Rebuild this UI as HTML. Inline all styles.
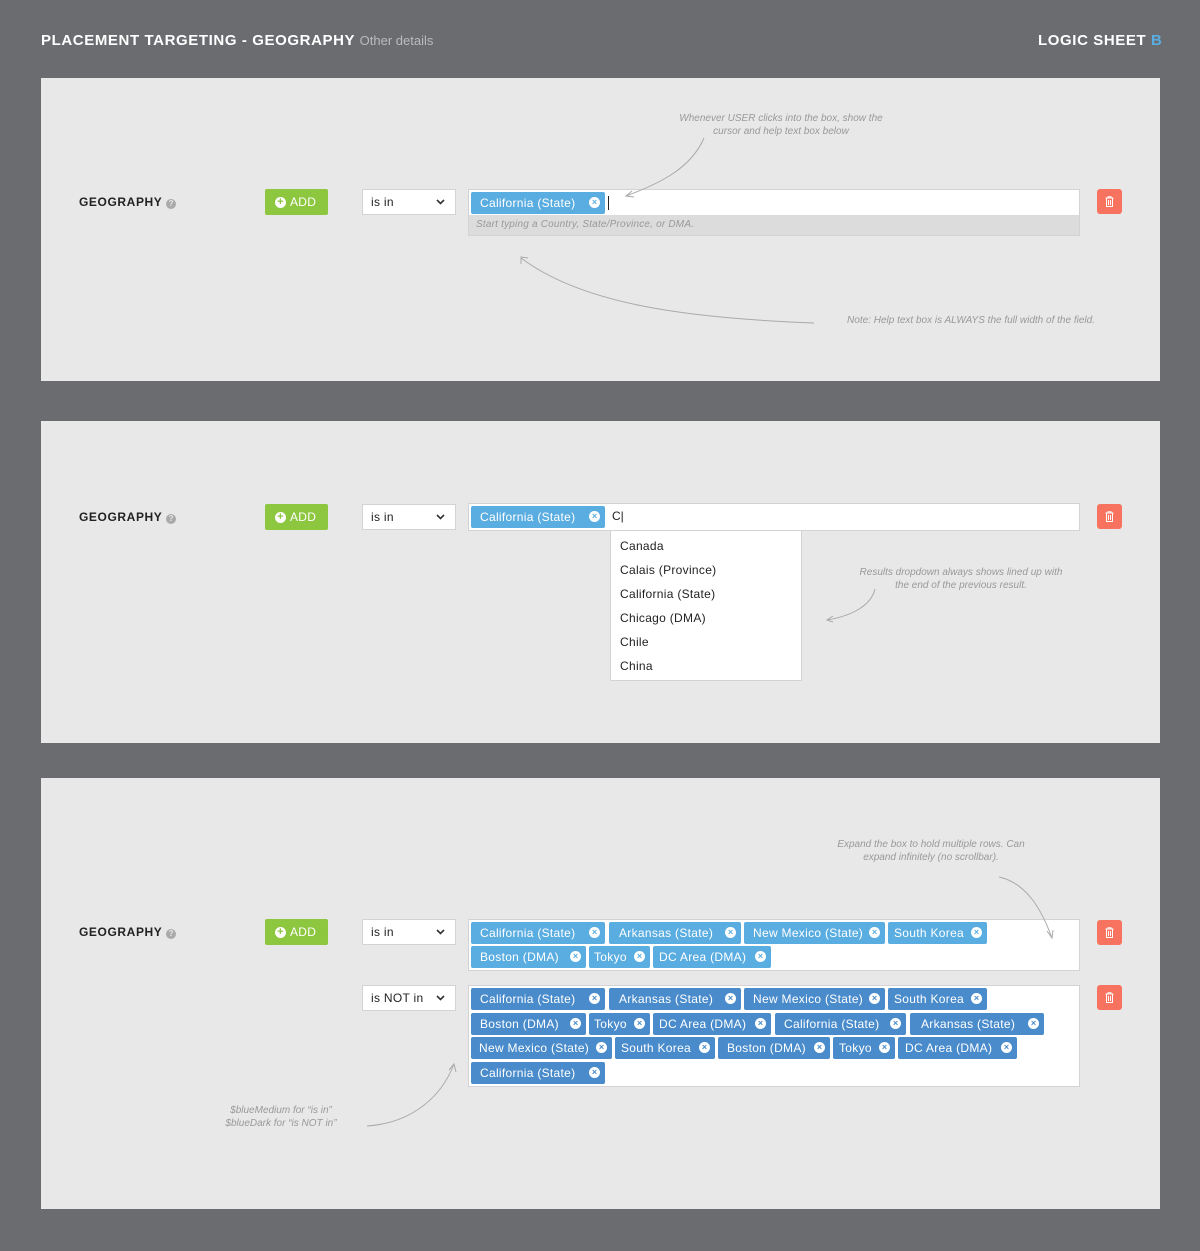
<!DOCTYPE html>
<html><head><meta charset="utf-8"><style>
*{margin:0;padding:0;box-sizing:border-box}
body{width:1200px;height:1251px;background:#6b6c70;font-family:"Liberation Sans",sans-serif;position:relative;overflow:hidden}
.a{position:absolute}
.panel{position:absolute;left:41px;width:1119px;background:#e8e8e8}
.lbl{position:absolute;left:38px;font-size:12px;font-weight:bold;color:#222;letter-spacing:.6px}
.lbl i{display:inline-block;width:10px;height:10px;border-radius:50%;background:#aaa;color:#e8e8e8;font-size:8px;font-style:normal;text-align:center;line-height:10px;margin-left:4px;vertical-align:0}
.add{position:absolute;left:224px;width:63px;height:26px;background:#8dc63f;border-radius:2px;color:#fff;font-size:12px;line-height:26px;padding-left:10px;letter-spacing:.3px}
.add b{position:absolute;left:10px;top:8px;width:11px;height:11px;border-radius:50%;background:#fff;color:#8dc63f;font-size:11px;line-height:11px;text-align:center}
.add span{margin-left:15px}
.sel{position:absolute;left:321px;width:94px;height:26px;background:#fff;border:1px solid #d3d3d3;font-size:12px;line-height:24px;padding-left:8px;color:#222;letter-spacing:.3px}
.sel svg{position:absolute;right:10px;top:9px}
.box{position:absolute;left:427px;width:612px;background:#fff;border:1px solid #d3d3d3}
.del{position:absolute;left:1056px;width:25px;height:25px;background:#f7735f;border-radius:3px}
.del svg{position:absolute;left:8px;top:7px}
.t{position:absolute;height:22px;border-radius:2px;color:#fff;font-size:12px;line-height:22px;padding-left:9px;white-space:nowrap;letter-spacing:.3px}
.m{background:#5aade0}.d{background:#4a8ccb}
.t b{position:absolute;right:5px;top:5px;width:11px;height:11px;border-radius:50%;background:#fff;font-size:9px;line-height:11px;text-align:center;font-weight:bold;letter-spacing:0}
.m b{color:#5aade0}.d b{color:#4a8ccb}
.note{position:absolute;font-size:10px;font-style:italic;color:#999;text-align:center;line-height:13px}
.dd div{height:24px;line-height:24px;font-size:12px;color:#222;padding-left:9px;letter-spacing:.3px}
</style></head><body>
<div class="a" style="left:41px;top:32px;font-size:15px;font-weight:bold;color:#fff;letter-spacing:.6px">PLACEMENT TARGETING - GEOGRAPHY <span style="font-weight:normal;font-size:13px;color:#bbb;letter-spacing:0">Other details</span></div>
<div class="a" style="left:1038px;top:32px;font-size:15px;font-weight:bold;color:#fff;letter-spacing:.6px">LOGIC SHEET <span style="color:#5aade0">B</span></div>

<!-- panel 1 -->
<div class="panel" style="top:78px;height:303px">
<div class="lbl" style="top:117px">GEOGRAPHY<i>?</i></div>
<div class="add" style="top:111px"><b>+</b><span>ADD</span></div>
<div class="sel" style="top:111px">is in<svg width="9" height="6"><path d="M1 1l3.5 3.5L8 1" stroke="#333" stroke-width="1.6" fill="none"/></svg></div>
<div class="box" style="top:111px;height:27px"></div>
<div class="a" style="left:427px;top:137px;width:612px;height:21px;background:#dcdcdc;border:1px solid #d3d3d3;border-top:none;font-size:10px;font-style:italic;color:#999;line-height:20px;padding-left:7px;letter-spacing:.2px">Start typing a Country, State/Province, or DMA.</div>
<div class="t m" style="left:430px;top:114px;width:134px">California (State)<b>×</b></div>
<div class="a" style="left:567px;top:118px;width:1px;height:14px;background:#222"></div>
<div class="del" style="top:111px"><svg width="9" height="11"><path d="M0.5 2h8M3 2V0.8h3V2M1.5 2.5v8h6v-8M3.5 4v5M5.5 4v5" stroke="#fff" stroke-width="1" fill="none"/></svg></div>
<div class="note" style="left:610px;top:34px;width:260px">Whenever USER clicks into the box, show the<br>cursor and help text box below</div>
<div class="note" style="left:780px;top:236px;width:300px">Note: Help text box is ALWAYS the full width of the field.</div>
<svg class="a" style="left:0;top:0" width="1119" height="303"><g stroke="#aaa" fill="none" stroke-width="1"><path d="M663 60C650 90 620 105 585 118"/><path d="M591 113l-6 5 8 1"/><path d="M773 245C640 240 540 225 480 180"/><path d="M480 186l0-7 7 1"/></g></svg>
</div>

<!-- panel 2 -->
<div class="panel" style="top:421px;height:322px">
<div class="lbl" style="top:89px">GEOGRAPHY<i>?</i></div>
<div class="add" style="top:83px"><b>+</b><span>ADD</span></div>
<div class="sel" style="top:83px">is in<svg width="9" height="6"><path d="M1 1l3.5 3.5L8 1" stroke="#333" stroke-width="1.6" fill="none"/></svg></div>
<div class="box" style="top:82px;height:28px"></div>
<div class="t m" style="left:430px;top:85px;width:134px">California (State)<b>×</b></div>
<div class="a" style="left:571px;top:88px;font-size:12px;color:#222">C|</div>
<div class="a dd" style="left:569px;top:109px;width:192px;height:151px;background:#fff;border:1px solid #d3d3d3;padding-top:3px"><div>Canada</div><div>Calais (Province)</div><div>California (State)</div><div>Chicago (DMA)</div><div>Chile</div><div>China</div></div>
<div class="del" style="top:83px"><svg width="9" height="11"><path d="M0.5 2h8M3 2V0.8h3V2M1.5 2.5v8h6v-8M3.5 4v5M5.5 4v5" stroke="#fff" stroke-width="1" fill="none"/></svg></div>
<div class="note" style="left:790px;top:145px;width:260px">Results dropdown always shows lined up with<br>the end of the previous result.</div>
<svg class="a" style="left:0;top:0" width="1119" height="322"><g stroke="#aaa" fill="none" stroke-width="1"><path d="M834 168C830 185 810 195 786 199"/><path d="M792 195l-6 4 6 2"/></g></svg>
</div>

<!-- panel 3 -->
<div class="panel" style="top:778px;height:431px">
<div class="lbl" style="top:147px">GEOGRAPHY<i>?</i></div>
<div class="add" style="top:141px"><b>+</b><span>ADD</span></div>
<div class="sel" style="top:141px">is in<svg width="9" height="6"><path d="M1 1l3.5 3.5L8 1" stroke="#333" stroke-width="1.6" fill="none"/></svg></div>
<div class="sel" style="top:207px">is NOT in<svg width="9" height="6"><path d="M1 1l3.5 3.5L8 1" stroke="#333" stroke-width="1.6" fill="none"/></svg></div>
<div class="box" style="top:141px;height:52px"></div>
<div class="box" style="top:207px;height:102px"></div>
<div class="del" style="top:142px"><svg width="9" height="11"><path d="M0.5 2h8M3 2V0.8h3V2M1.5 2.5v8h6v-8M3.5 4v5M5.5 4v5" stroke="#fff" stroke-width="1" fill="none"/></svg></div>
<div class="del" style="top:207px"><svg width="9" height="11"><path d="M0.5 2h8M3 2V0.8h3V2M1.5 2.5v8h6v-8M3.5 4v5M5.5 4v5" stroke="#fff" stroke-width="1" fill="none"/></svg></div>
<div class="t m" style="left:430px;top:144px;width:134px">California (State)<b>×</b></div>
<div class="t m" style="left:568px;top:144px;width:132px;padding-left:10px">Arkansas (State)<b>×</b></div>
<div class="t m" style="left:703px;top:144px;width:141px">New Mexico (State)<b>×</b></div>
<div class="t m" style="left:847px;top:144px;width:99px;padding-left:6px">South Korea<b>×</b></div>
<div class="t m" style="left:430px;top:168px;width:115px">Boston (DMA)<b>×</b></div>
<div class="t m" style="left:548px;top:168px;width:61px;padding-left:5px">Tokyo<b>×</b></div>
<div class="t m" style="left:612px;top:168px;width:118px;padding-left:6px">DC Area (DMA)<b>×</b></div>
<div class="t d" style="left:430px;top:210px;width:134px">California (State)<b>×</b></div>
<div class="t d" style="left:568px;top:210px;width:132px;padding-left:10px">Arkansas (State)<b>×</b></div>
<div class="t d" style="left:703px;top:210px;width:141px">New Mexico (State)<b>×</b></div>
<div class="t d" style="left:847px;top:210px;width:99px;padding-left:6px">South Korea<b>×</b></div>
<div class="t d" style="left:430px;top:235px;width:115px">Boston (DMA)<b>×</b></div>
<div class="t d" style="left:548px;top:235px;width:61px;padding-left:5px">Tokyo<b>×</b></div>
<div class="t d" style="left:612px;top:235px;width:118px;padding-left:6px">DC Area (DMA)<b>×</b></div>
<div class="t d" style="left:734px;top:235px;width:131px">California (State)<b>×</b></div>
<div class="t d" style="left:869px;top:235px;width:134px;padding-left:11px">Arkansas (State)<b>×</b></div>
<div class="t d" style="left:430px;top:259px;width:141px;padding-left:8px">New Mexico (State)<b>×</b></div>
<div class="t d" style="left:574px;top:259px;width:100px;padding-left:6px">South Korea<b>×</b></div>
<div class="t d" style="left:677px;top:259px;width:112px">Boston (DMA)<b>×</b></div>
<div class="t d" style="left:792px;top:259px;width:62px;padding-left:6px">Tokyo<b>×</b></div>
<div class="t d" style="left:857px;top:259px;width:119px;padding-left:7px">DC Area (DMA)<b>×</b></div>
<div class="t d" style="left:430px;top:284px;width:134px">California (State)<b>×</b></div>
<div class="note" style="left:760px;top:60px;width:260px">Expand the box to hold multiple rows. Can<br>expand infinitely (no scrollbar).</div>
<div class="note" style="left:160px;top:326px;width:160px">$blueMedium for “is in”<br>$blueDark for “is NOT in”</div>
<svg class="a" style="left:0;top:0" width="1119" height="431"><g stroke="#aaa" fill="none" stroke-width="1"><path d="M958 99C985 105 1000 130 1011 160"/><path d="M1006 153l5 7 1-8"/><path d="M326 348C370 345 400 320 413 286"/><path d="M408 292l5-6 2 8"/></g></svg>
</div>
</body></html>
